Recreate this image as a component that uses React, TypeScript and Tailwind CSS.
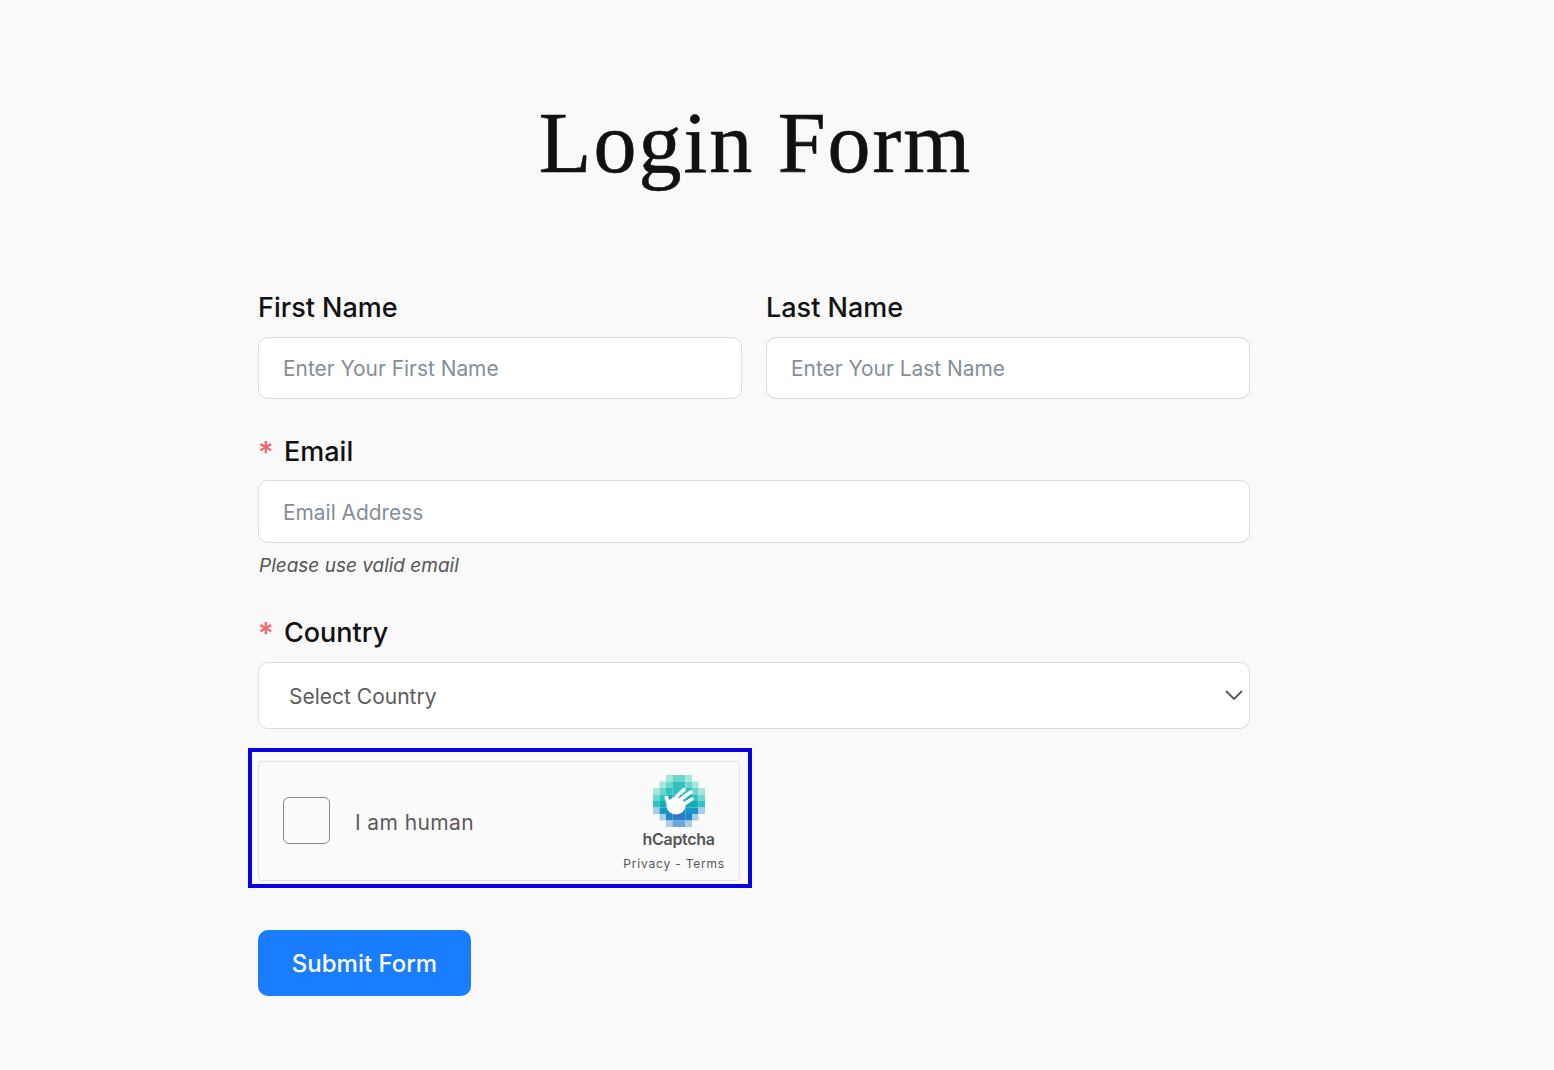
const LOGO_ROWS = [
  '..ABBA..',
  '.ABCCBA.',
  'ABCCCCBA',
  'BCDDDDCB',
  'CDDEEDDC',
  'HEEFFEEH',
  '.HFGGFH.',
  '..HIIH..',
]

const LOGO_COLORS: Record<string, string> = {
  A: '#a5e5dc',
  B: '#6fd6cb',
  C: '#2cc4bc',
  D: '#14adbd',
  E: '#1598c4',
  F: '#1c86c6',
  G: '#2a7ac4',
  H: '#a9cfe8',
  I: '#6aa8dc',
}

function HCaptchaLogo() {
  return (
    <svg className="ml-[9px]" width="52" height="52" viewBox="0 0 52 52">
      {LOGO_ROWS.map((row, y) =>
        row.split('').map((c, x) =>
          c === '.' ? null : (
            <rect
              key={`${x}-${y}`}
              x={x * 6.5}
              y={y * 6.5}
              width="6.5"
              height="6.5"
              fill={LOGO_COLORS[c]}
            />
          ),
        ),
      )}
      {/* hand */}
      <g fill="#fff" stroke="#fff" strokeLinecap="round">
        <ellipse cx="23" cy="31" rx="9.5" ry="8.5" stroke="none" />
        <path d="M20 25L31 14.5M24 27L38 17M28 31L39 24" strokeWidth="3.6" fill="none" />
        <path d="M16 31L13.5 22.5" strokeWidth="3.8" fill="none" />
      </g>
    </svg>
  )
}

function Label({ children, required }: { children: string; required?: boolean }) {
  return (
    <label className="flex h-7 items-center text-[27px] font-medium leading-7 text-[#111]">
      {required && <span className="w-[26px] text-[30px] text-[#f4646c]">*</span>}
      {children}
    </label>
  )
}

function TextInput({ placeholder, className }: { placeholder: string; className: string }) {
  return (
    <input
      placeholder={placeholder}
      className={`w-full rounded-[10px] border border-[#dcdcdc] bg-white px-6 text-[20.9px] outline-none placeholder:text-[#868e96] ${className}`}
    />
  )
}

export default function App() {
  return (
    <div className="min-h-[1070px] bg-[#f9f9f9] font-['Inter',sans-serif]">
      <div className="ml-[258px] w-[992px] pt-[91px]">
        <h1 className="pl-[3px] text-center font-['Liberation_Serif',serif] text-[86px] leading-[104px] tracking-[2px] text-[#111] [-webkit-text-stroke:0.6px_#111]">
          Login Form
        </h1>

        <div className="mt-[99px] grid grid-cols-2 gap-6">
          <div>
            <Label>First Name</Label>
            <TextInput placeholder="Enter Your First Name" className="mt-[15px] h-[62px]" />
          </div>
          <div>
            <Label>Last Name</Label>
            <TextInput placeholder="Enter Your Last Name" className="mt-[15px] h-[62px]" />
          </div>
        </div>

        <div className="mt-[39px]">
          <Label required>Email</Label>
          <TextInput placeholder="Email Address" className="mt-[14px] h-[63px] pt-[2px]" />
          <p className="mt-[11px] pl-px text-[19px] italic leading-6 text-[#555]">Please use valid email</p>
        </div>

        <div className="mt-[41px]">
          <Label required>Country</Label>
          <div className="relative mt-[15px]">
            <select className="h-[67px] w-full appearance-none rounded-[10px] border border-[#dcdcdc] bg-white px-[30px] pt-[2px] text-[21px] text-[#5c5c5c] outline-none">
              <option>Select Country</option>
            </select>
            <svg
              className="absolute right-[6px] top-[26px] text-[#555]"
              width="20"
              height="14"
              viewBox="0 0 20 14"
              fill="none"
              stroke="currentColor"
              strokeWidth="1.8"
            >
              <path d="M2 3l8 8 8-8" />
            </svg>
          </div>
        </div>

        <div className="-ml-[10px] mt-[19px] h-[140px] w-[504px] border-4 border-[#0a00e6] pl-[6px] pt-[9px]">
          <div className="flex h-[120px] w-[482px] items-center rounded-[4px] border border-[#e0e0e0] bg-[#fafafa] pl-6 pr-[14px]">
            <div className="mb-[2px] h-[47px] w-[47px] rounded-[6px] border border-[#8a8a8a] bg-[#fafafa]" />
            <span className="ml-[25px] mt-[4px] text-[21px] tracking-[0.4px] text-[#5c5c5c]">I am human</span>
            <div className="ml-auto mt-[5px] flex flex-col items-center">
              <HCaptchaLogo />
              <span className="ml-[9px] mt-[2px] text-[16px] font-semibold leading-5 tracking-[-0.3px] text-[#555]">hCaptcha</span>
              <span className="mt-[7px] text-[12px] leading-4 tracking-[0.8px] text-[#555]">Privacy - Terms</span>
            </div>
          </div>
        </div>

        <button className="mt-[42px] h-[66px] w-[213px] rounded-[10px] bg-[#1a7dff] pt-[2px] text-[24px] font-medium text-white">
          Submit Form
        </button>
      </div>
    </div>
  )
}
